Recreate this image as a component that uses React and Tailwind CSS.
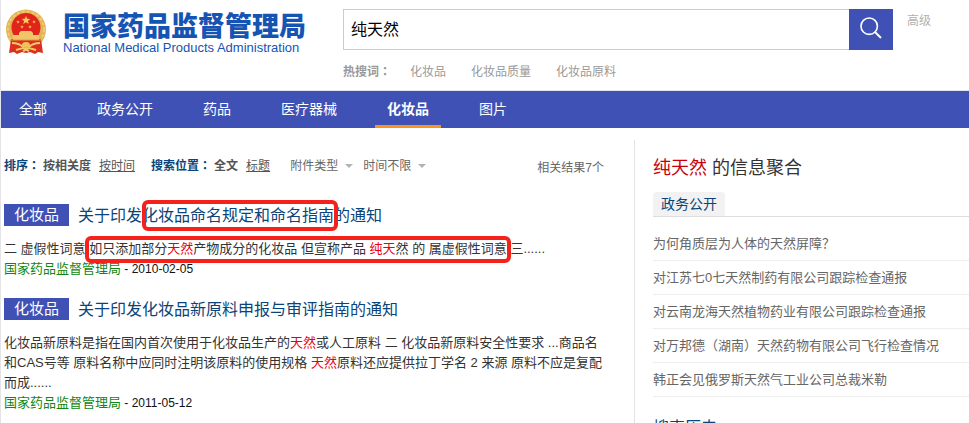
const channels = ['全部', '政务公开', '药品', '医疗器械', '化妆品', '图片'];
const hotWords = ['化妆品', '化妆品质量', '化妆品原料'];
const news = [
  '为何角质层为人体的天然屏障？',
  '对江苏七0七天然制药有限公司跟踪检查通报',
  '对云南龙海天然植物药业有限公司跟踪检查通报',
  '对万邦德（湖南）天然药物有限公司飞行检查情况',
  '韩正会见俄罗斯天然气工业公司总裁米勒',
];

const Emblem = () => (
  <svg viewBox="0 0 42 46" className="h-[46px] w-[42px] shrink-0" aria-hidden="true">
    <circle cx="21" cy="20.5" r="20" fill="#e3b455" />
    <circle cx="21" cy="20.5" r="18" fill="none" stroke="#efcb78" strokeWidth="2" strokeDasharray="3 2" />
    <ellipse cx="21" cy="18.5" rx="14.5" ry="14.5" fill="#e0241c" />
    <path d="M6 30 L36 30 L38 44 L33 43 L30 45 L25 43 L21 44 L17 43 L12 45 L9 43 L4 44 Z" fill="#dd2f20" />
    <path d="M21 7 l1.2 2.8 3 .2 -2.3 2 .8 2.9 -2.7 -1.6 -2.7 1.6 .8 -2.9 -2.3 -2 3 -.2z" fill="#f6cf58" />
    <path d="M13 11l.5 1.2 1.3.1-1 .9.3 1.3-1.1-.7-1.1.7.3-1.3-1-.9 1.3-.1zM29 11l.5 1.2 1.3.1-1 .9.3 1.3-1.1-.7-1.1.7.3-1.3-1-.9 1.3-.1zM17 16l.5 1.2 1.3.1-1 .9.3 1.3-1.1-.7-1.1.7.3-1.3-1-.9 1.3-.1zM25 16l.5 1.2 1.3.1-1 .9.3 1.3-1.1-.7-1.1.7.3-1.3-1-.9 1.3-.1z" fill="#f0b548" />
    <path d="M14 24 L16 22 H26 L28 24 V26 H34 V31 H8 V26 H14 Z" fill="#f0c468" />
    <path d="M6 31 H36" stroke="#dba043" />
    <path d="M7 34 Q14 34 18 38 M35 34 Q28 34 24 38 M11 41 L18 39 L24 42 M31 41 L24 39 L18 42" fill="none" stroke="#f2c766" strokeWidth="2" />
    <ellipse cx="21" cy="36" rx="4" ry="3" fill="#f0c25c" />
  </svg>
);

// Traditional face centres the full-width colon in its cell
const Colon = () => <span className="font-['Noto_Sans_CJK_TC',sans-serif]">：</span>;

const Filter = ({ label }) => (
  <label className="relative flex items-center">
    <select aria-label={label} className="w-[63px] appearance-none bg-transparent text-[#666]">
      <option>{label}</option>
    </select>
    <svg viewBox="0 0 8 4" className="pointer-events-none absolute right-0 h-1 w-2">
      <path d="M0 0h8L4 4z" fill="#b3b3b3" />
    </svg>
  </label>
);

const Hit = ({ children }) => <em className="text-[#e60012] not-italic">{children}</em>;

const Result = ({ title, children, date }) => (
  <article className="mb-[19px]">
    <h3 className="mb-[13px] flex h-[22px] items-start">
      <span className="mr-[9px] h-[22px] w-[65px] bg-[#3f51b5] text-center text-[15px] leading-[22px] text-white">化妆品</span>
      <a href="#" className="text-base leading-6 text-[#0b4478]">{title}</a>
    </h3>
    <p className="text-[13px] leading-5 text-[#333]">{children}</p>
    <p className="text-[12px] leading-5 text-[#111]">
      <span className="text-[13px] text-[#118611]">国家药品监督管理局</span> - {date}
    </p>
  </article>
);

const App = () => (
  <div className="h-screen overflow-hidden border-l border-[#e4e4e8] bg-white font-['Liberation_Sans','Noto_Sans_CJK_SC',sans-serif]">
    <header className="flex h-[90px] items-start">
      <a href="#" className="flex w-[342px] shrink-0 gap-4 pt-[9px] pl-1">
        <Emblem />
        <span className="flex flex-col pt-1 text-[#1654b4]">
          <strong className="text-[27px] leading-7 font-black">国家药品监督管理局</strong>
          <span className="text-[13px] leading-[14px]">National Medical Products Administration</span>
        </span>
      </a>
      <div className="min-w-0 flex-1 pt-[9px]">
        <form className="flex h-[41px]">
          <input
            aria-label="搜索"
            defaultValue="纯天然"
            className="min-w-0 flex-1 border border-r-0 border-[#ccc] px-[7px] text-base text-black outline-none"
          />
          <button type="button" aria-label="搜索" className="flex w-11 items-center justify-center bg-[#3f51b5]">
            <svg viewBox="0 0 22 22" className="mb-1 h-[22px] w-[22px]" fill="none" stroke="white" strokeWidth="1.6">
              <circle cx="9.2" cy="9.2" r="8.2" />
              <path d="M15 15l6 6" strokeWidth="2" />
            </svg>
          </button>
        </form>
        <div className="mt-[11px] flex items-baseline gap-[25px] text-[12px] leading-5 text-[#999]">
          <strong className="-mr-[6px]">热搜词<Colon /></strong>
          {hotWords.map((word) => (
            <a key={word} href="#">{word}</a>
          ))}
        </div>
      </div>
      <a href="#" className="w-[76px] shrink-0 pt-[11px] pl-[14px] text-[12px] leading-5 text-[#b0b0b0]">高级</a>
    </header>

    <nav className="flex h-[38px] gap-[26px] border-t border-[#dfe2f2] bg-[#3f51b5] pl-[6px] text-[14px] text-white">
      {channels.map((name) => (
        <a
          key={name}
          href="#"
          className={
            name === '化妆品'
              ? 'border-b-3 border-[#f7941d] px-3 leading-[36px] font-bold'
              : 'px-3 leading-[36px]'
          }
        >
          {name}
        </a>
      ))}
    </nav>

    <div className="grid grid-cols-[minmax(0,1fr)_335px] pt-3">
      <main className="pr-[27px] pl-[3px]">
        <div className="mb-[22px] flex h-[42px] items-end text-[12px] leading-5 whitespace-nowrap text-[#555]">
          <div className="mb-[6px] flex items-baseline">
            <strong className="text-[#0b4478]">排序<Colon /></strong>
            <strong className="ml-[3px]">按相关度</strong>
            <a href="#" className="ml-2 underline">按时间</a>
            <strong className="ml-4 text-[#0b4478]">搜索位置<Colon /></strong>
            <strong className="ml-[3px]">全文</strong>
            <a href="#" className="mr-5 ml-2 underline">标题</a>
            <div className="flex gap-[10px]">
              <Filter label="附件类型" />
              <Filter label="时间不限" />
            </div>
          </div>
          <span className="mr-[3px] mb-1 ml-auto text-[#666]">相关结果7个</span>
        </div>

        <Result
          title={
            <>
              关于印发
              <span className="relative">
                化妆品命名规定和命名指南
                <i className="absolute -top-[7px] -right-1 -bottom-[7px] left-0 rounded-md border-4 border-[#f5221b]" />
              </span>
              的通知
            </>
          }
          date="2010-02-05"
        >
          二 虚假性词意{' '}
          <span className="relative">
            如只添加部分<Hit>天然</Hit>产物成分的化妆品 但宣称产品 <Hit>纯天</Hit>然 的 属虚假性词意
            <i className="absolute -top-[5px] -right-1 -bottom-[7px] -left-1 rounded-md border-4 border-[#f5221b]" />
          </span>{' '}
          三......
        </Result>
        <Result title="关于印发化妆品新原料申报与审评指南的通知" date="2011-05-12">
          化妆品新原料是指在国内首次使用于化妆品生产的<Hit>天然</Hit>或人工原料 二 化妆品新原料安全性要求 ...商品名和CAS号等
          原料名称中应同时注明该原料的使用规格 <Hit>天然</Hit>原料还应提供拉丁学名 2 来源 原料不应是复配而成......
        </Result>
      </main>

      <aside className="h-screen border-l border-[#e3e3e3] pt-[15px] pl-[18px]">
        <h2 className="mb-[11px] text-[18px] leading-[26px] text-[#333]">
          <span className="text-[#c7000b]">纯天然</span> 的信息聚合
        </h2>
        <div className="flex border-b border-[#ddd]">
          <a href="#" className="rounded-t-sm bg-[#f2f2f2] px-2 text-[14px] leading-6 text-[#0b4478]">政务公开</a>
        </div>
        <ul className="pt-[10px] text-[13px] leading-[33px] text-[#666]">
          {news.map((item) => (
            <li key={item} className="border-b border-[#eee]"><a href="#">{item}</a></li>
          ))}
        </ul>
        <h2 className="pt-[21px] text-base leading-5 text-[#0b4478]">搜索历史</h2>
      </aside>
    </div>
  </div>
);

export default App;
